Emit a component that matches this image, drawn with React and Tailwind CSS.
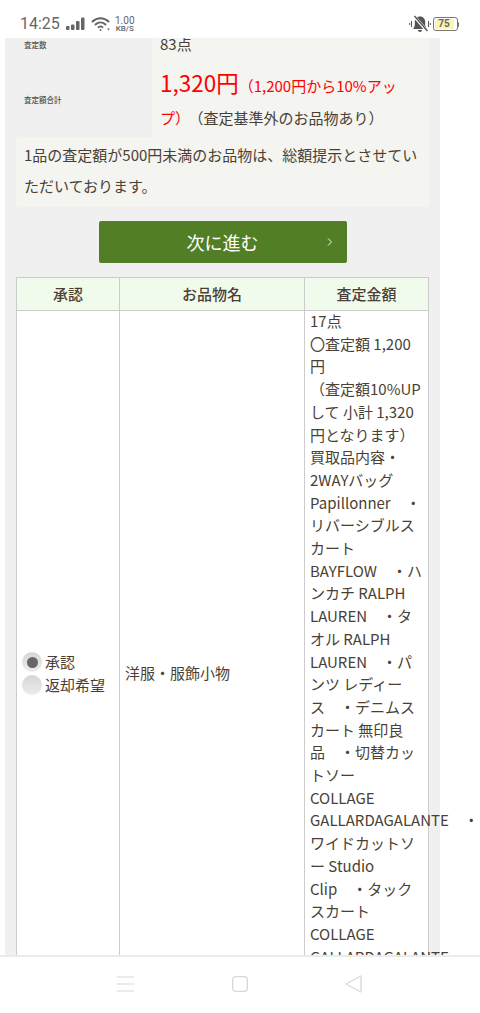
import React from "react";

const lines = ["17点","〇査定額 1,200","円","（査定額10%UP","して 小計 1,320","円となります）","買取品内容・","2WAYバッグ","Papillonner　・","リバーシブルス","カート","BAYFLOW　・ハ","ンカチ RALPH","LAUREN　・タ","オル RALPH","LAUREN　・パ","ンツ レディー","ス　・デニムス","カート 無印良","品　・切替カッ","トソー","COLLAGE","GALLARDAGALANTE　・","ワイドカットソ","ー Studio","Clip　・タック","スカート","COLLAGE","GALLARDAGALANTE"];

function StatusBar() {
  return (
    <div className="h-[38px] bg-white flex items-center justify-between pl-[20px] pr-[21px] pt-[10px] shrink-0 text-[#666]">
      <div className="flex items-center">
        <span className="text-[16px] leading-none font-['Roboto',sans-serif] text-[#666] w-[46px]">14:25</span>
        <svg width="20" height="14" viewBox="0 0 20 14" fill="#666">
          <rect x="0" y="9" width="3.500" height="4" rx="1" />
          <rect x="5" y="7.500" width="3.500" height="5.500" rx="1" />
          <rect x="10" y="4" width="3.500" height="9" rx="1" />
          <rect x="15" y="0.500" width="3.500" height="12.500" rx="1" />
        </svg>
        <svg width="20" height="16" viewBox="0 0 20 16" className="ml-[5px]" fill="none" stroke="#666" strokeLinecap="round">
          <path d="M1.500 5.500C6 1.200 13 1.200 17.500 5.500" strokeWidth="2" />
          <path d="M4.500 8.500C7.500 5.800 11.500 5.800 14.500 8.500" strokeWidth="2" />
          <path d="M7.500 11.200C8.800 10.200 10.200 10.200 11.500 11.200" strokeWidth="1.800" />
          <circle cx="9.500" cy="14" r="0.900" fill="#666" stroke="none" />
          <path d="M16 12.500h3l-1.500 2z" fill="#666" stroke="none" />
        </svg>
        <div className="ml-[4px] flex flex-col items-center font-['Roboto',sans-serif] text-[#666]">
          <span className="text-[10px] leading-[9px]">1.00</span>
          <span className="text-[8px] leading-[8px] font-medium">KB/S</span>
        </div>
      </div>
      <div className="flex items-center">
        <svg width="22" height="18" viewBox="0 0 22 18" fill="#555">
          <path d="M11 1.500c-3.400 0-5.200 2.500-5.200 5.500v3.500L4.200 14h13.600L16.200 10.500V7c0-3-1.800-5.500-5.200-5.500z" />
          <path d="M9 15h4a2 2 0 0 1-4 0z" />
          <path d="M2.500 6v6M0.700 8v2M19.500 6v6M21.300 8v2" stroke="#555" strokeWidth="1" fill="none" />
          <path d="M5 1L18 16" stroke="#fff" strokeWidth="3" />
          <path d="M5.500 1L18.500 16" stroke="#555" strokeWidth="1.400" />
        </svg>
        <div className="ml-[2px] flex items-center">
          <div className="w-[25px] h-[14px] border border-[#777] rounded-[3px] p-[1px] flex">
            <div className="w-[19px] bg-[#fdf3b5] rounded-[1px] flex items-center justify-center text-[10px] leading-none font-bold text-[#666] font-['Roboto',sans-serif]">75</div>
          </div>
          <div className="w-[1.500px] h-[5px] bg-[#777] rounded-r-sm"></div>
        </div>
      </div>
    </div>
  );
}

function NavBar() {
  return (
    <div className="h-[58px] bg-white border-t-2 border-[#ebebeb] flex items-center justify-between pl-[117px] pr-[118px] pb-[2px] shrink-0">
      <svg width="17" height="16" viewBox="0 0 17 16" stroke="#d8d8d8" strokeWidth="1.200" fill="none">
        <path d="M0 1h17M0 8h17M0 15h17" />
      </svg>
      <svg width="16" height="16" viewBox="0 0 16 16" stroke="#d8d8d8" strokeWidth="1.300" fill="none">
        <rect x="0.700" y="0.700" width="14.600" height="14.600" rx="3" />
      </svg>
      <svg width="17" height="18" viewBox="0 0 17 18" stroke="#d8d8d8" strokeWidth="1.300" fill="none" strokeLinejoin="round">
        <path d="M16 1L1 9l15 8z" />
      </svg>
    </div>
  );
}

function Radio({ checked }) {
  return (
    <span className="w-[20px] h-[20px] rounded-full bg-linear-to-b from-[#d6d6d6] to-[#ececec] flex items-center justify-center">
      {checked && <span className="w-[11px] h-[11px] rounded-full bg-[#666]"></span>}
    </span>
  );
}

export default function App() {
  return (
    <div className="w-[480px] h-[1013px] bg-white flex flex-col overflow-hidden font-['Noto_Sans_CJK_JP','Noto_Sans',sans-serif] text-[#4a3f35]">
      <StatusBar />
      <div className="flex-1 min-h-0 overflow-hidden">
        <div className="ml-[5px] w-[435px] bg-[#f0f0f0] px-[11px] min-h-full">
          <div className="-ml-[11px] flex w-[424px]">
            <div className="w-[147px] flex flex-col text-[7.500px] font-medium text-[#5a5048] pl-[19px]">
              <div className="h-[13px] leading-[13px]">査定数</div>
              <div className="h-[86px] flex items-center pt-[12px]">査定額合計</div>
            </div>
            <div className="flex-1 bg-[#f4f4f0] pl-[8px]">
              <div className="h-[13px] text-[15px] leading-[11px]">83点</div>
              <div className="pt-[16px] h-[86px] leading-[30px] text-[15px]">
                <div className="text-[#ff0000] whitespace-nowrap h-[39px] flex items-baseline">
                  <span className="text-[22.500px] leading-[30px]">1,320円</span>
                  <span className="text-[15px]">（1,200円から10%アッ</span>
                </div>
                <div className="whitespace-nowrap -mt-[3px]"><span className="text-[#ff0000]">プ）</span><span className="ml-[6px]">（査定基準外のお品物あり）</span></div>
              </div>
            </div>
          </div>
          <div className="bg-[#f4f4f0] rounded-[2px] h-[70px] px-[8px] pt-[3px] text-[15px] leading-[30.500px]">
            <div className="whitespace-nowrap">1品の査定額が500円未満のお品物は、総額提示とさせてい</div>
            <div>ただいております。</div>
          </div>
          <div className="flex justify-center mt-[14px]">
            <button className="relative w-[248px] h-[42px] bg-[#527f26] rounded-[2px] text-white text-[18px] leading-[40px] text-center">
              次に進む
              <span className="absolute right-[14px] top-0 text-[10px] leading-[40px]">
                <svg width="6" height="8" viewBox="0 0 6 8" className="inline" fill="none" stroke="#fff" strokeWidth="0.900"><path d="M1 0.500L4.500 4 1 7.500" /></svg>
              </span>
            </button>
          </div>
          <table className="mt-[14px] w-[412px] table-fixed border-collapse text-[15px] leading-[22.700px]">
            <colgroup>
              <col className="w-[103px]" />
              <col className="w-[185px]" />
              <col className="w-[124px]" />
            </colgroup>
            <thead>
              <tr className="bg-[#f1fbec] h-[33px]">
                <th className="border border-[#ccc] font-medium">承認</th>
                <th className="border border-[#ccc] font-medium">お品物名</th>
                <th className="border border-[#ccc] font-medium">査定金額</th>
              </tr>
            </thead>
            <tbody className="bg-white">
              <tr>
                <td className="border border-[#ccc] pl-[5px] align-middle">
                  <div className="flex items-center gap-[3px] h-[22.700px] whitespace-nowrap">
                    <Radio checked />
                    承認
                  </div>
                  <div className="flex items-center gap-[3px] h-[22.700px] whitespace-nowrap">
                    <Radio />
                    返却希望
                  </div>
                </td>
                <td className="border border-[#ccc] pl-[5px] align-middle">洋服・服飾小物</td>
                <td className="border border-[#ccc] pl-[5px] pb-[68px] whitespace-nowrap">
                  <div className="-mt-[1px]">
                    {lines.map((l, i) => <div key={i}>{l}</div>)}
                  </div>
                </td>
              </tr>
            </tbody>
          </table>
        </div>
      </div>
      <NavBar />
    </div>
  );
}
